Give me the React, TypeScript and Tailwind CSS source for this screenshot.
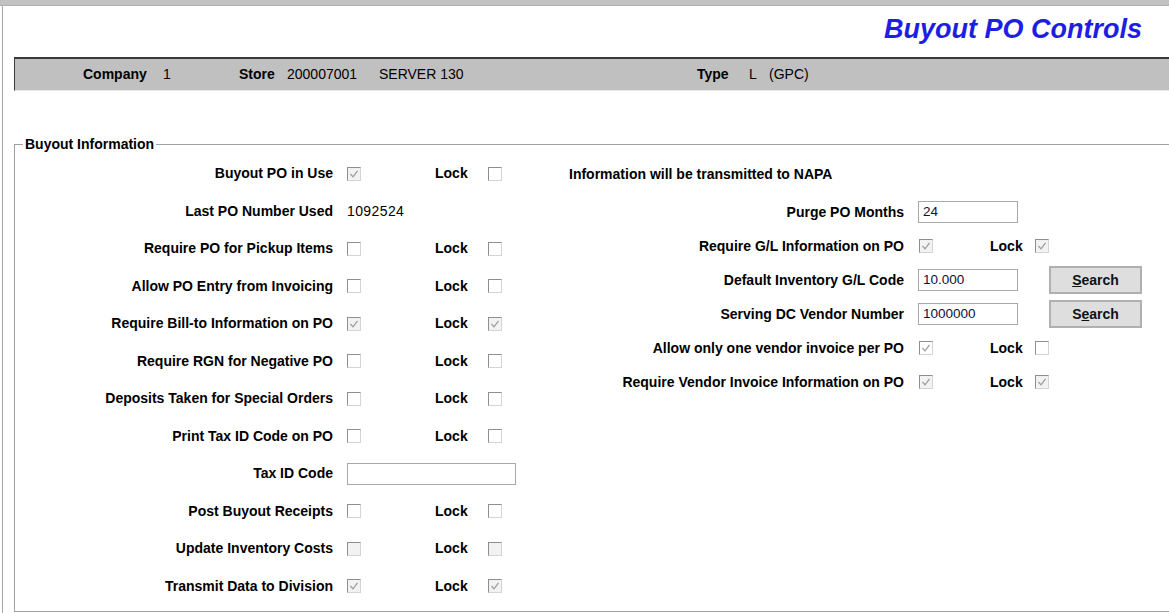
import React from "react";

type Box = { checked?: boolean; disabled?: boolean };

type LeftRow =
  | { label: string; kind: "check"; box: Box; lock: Box }
  | { label: string; kind: "value"; value: string }
  | { label: string; kind: "input"; value: string };

const leftRows: LeftRow[] = [
  { label: "Buyout PO in Use", kind: "check", box: { checked: true, disabled: true }, lock: {} },
  { label: "Last PO Number Used", kind: "value", value: "1092524" },
  { label: "Require PO for Pickup Items", kind: "check", box: {}, lock: {} },
  { label: "Allow PO Entry from Invoicing", kind: "check", box: {}, lock: {} },
  {
    label: "Require Bill-to Information on PO",
    kind: "check",
    box: { checked: true, disabled: true },
    lock: { checked: true, disabled: true },
  },
  { label: "Require RGN for Negative PO", kind: "check", box: {}, lock: {} },
  { label: "Deposits Taken for Special Orders", kind: "check", box: {}, lock: {} },
  { label: "Print Tax ID Code on PO", kind: "check", box: {}, lock: {} },
  { label: "Tax ID Code", kind: "input", value: "" },
  { label: "Post Buyout Receipts", kind: "check", box: {}, lock: {} },
  {
    label: "Update Inventory Costs",
    kind: "check",
    box: { disabled: true },
    lock: { disabled: true },
  },
  {
    label: "Transmit Data to Division",
    kind: "check",
    box: { checked: true, disabled: true },
    lock: { checked: true, disabled: true },
  },
];

const CheckBox = ({ checked, disabled, className = "" }: Box & { className?: string }) => (
  <span
    className={`flex items-center justify-center w-[14px] h-[14px] shrink-0 border border-t-[#8e8e8e] border-l-[#8e8e8e] border-r-[#d4d4d4] border-b-[#d4d4d4] ${
      disabled ? "bg-[#f2f2f2]" : "bg-white"
    } ${className}`}
  >
    {checked && (
      <svg width="10" height="10" viewBox="0 0 10 10">
        <path d="M1.5 5 L4 7.8 L8.5 1.8" fill="none" stroke="#9a9a9a" strokeWidth="1.2" />
      </svg>
    )}
  </span>
);

const TextBox = ({ value, w }: { value: string; w: string }) => (
  <div
    className={`ml-[14px] ${w} h-[22px] border border-[#a9a9a9] bg-white flex items-center px-[4px] text-[13.5px] text-[#10103a]`}
  >
    {value}
  </div>
);

const SearchButton = ({ pre, key1, post }: { pre: string; key1: string; post: string }) => (
  <button className="ml-[31px] w-[93px] h-[28px] border-2 border-[#b0b0b0] bg-[#dedede] text-[14px] font-bold text-[#111]">
    {pre}
    <span className="underline">{key1}</span>
    {post}
  </button>
);

const RightCheckRow = ({ label, box, lock }: { label: string; box: Box; lock: Box }) => (
  <div className="h-[34px] flex items-center">
    <span className="w-[364px] text-right font-bold">{label}</span>
    <CheckBox {...box} className="ml-[15px]" />
    <span className="ml-[57px] w-[45px] font-bold">Lock</span>
    <CheckBox {...lock} />
  </div>
);

export default function App() {
  return (
    <div
      className="w-[1169px] h-[613px] overflow-hidden bg-white text-[14px] text-black"
      style={{ fontFamily: '"Liberation Sans", Arial, sans-serif' }}
    >
      <div className="h-[6px] bg-[#c2c2c2] border-b border-[#b0b0b0]" />
      <div className="ml-[2px] h-[607px] border-l border-[#a6a6a6]">
        <div className="h-[51px] pt-[10px] pr-[27px] text-right">
          <span className="text-[27px] leading-[27px] font-bold italic text-[#1e1ee2]">
            Buyout PO Controls
          </span>
        </div>

        <div className="ml-[11px] h-[34px] bg-[#c0c0c0] border-t-2 border-t-[#3a3a3a] border-l border-l-[#3a3a3a] border-b border-b-[#e6e6e6] flex items-center pl-[68px] whitespace-nowrap">
          <span className="w-[80px] font-bold">Company</span>
          <span className="w-[76px]">1</span>
          <span className="w-[48px] font-bold">Store</span>
          <span className="w-[92px]">200007001</span>
          <span className="w-[318px]">SERVER 130</span>
          <span className="w-[52px] font-bold">Type</span>
          <span className="w-[20px]">L</span>
          <span>(GPC)</span>
        </div>

        <fieldset className="mt-[45px] ml-[11px] w-[1200px] h-[476px] border border-[#a0a0a0] pt-[3px]">
          <legend className="ml-[8px] px-[2px] font-bold leading-[16px]">Buyout Information</legend>
          <div className="flex whitespace-nowrap">
            <div className="w-[525px] flex flex-col">
              {leftRows.map((r) => (
                <div key={r.label} className="h-[37.5px] flex items-center">
                  <span className="w-[318px] text-right font-bold">{r.label}</span>
                  {r.kind === "check" && (
                    <>
                      <CheckBox {...r.box} className="ml-[14px]" />
                      <span className="ml-[74px] w-[53px] font-bold">Lock</span>
                      <CheckBox {...r.lock} />
                    </>
                  )}
                  {r.kind === "value" && (
                    <span className="ml-[14px] tracking-[0.4px]">{r.value}</span>
                  )}
                  {r.kind === "input" && <TextBox value={r.value} w="w-[169px]" />}
                </div>
              ))}
            </div>

            <div className="flex flex-col">
              <div className="h-[40px] flex items-center pl-[29px] pb-[2px] font-bold">
                Information will be transmitted to NAPA
              </div>
              <div className="h-[34px] flex items-center">
                <span className="w-[364px] text-right font-bold">Purge PO Months</span>
                <TextBox value="24" w="w-[100px]" />
              </div>
              <RightCheckRow
                label="Require G/L Information on PO"
                box={{ checked: true, disabled: true }}
                lock={{ checked: true, disabled: true }}
              />
              <div className="h-[34px] flex items-center">
                <span className="w-[364px] text-right font-bold">Default Inventory G/L Code</span>
                <TextBox value="10.000" w="w-[100px]" />
                <SearchButton pre="" key1="S" post="earch" />
              </div>
              <div className="h-[34px] flex items-center">
                <span className="w-[364px] text-right font-bold">Serving DC Vendor Number</span>
                <TextBox value="1000000" w="w-[100px]" />
                <SearchButton pre="S" key1="e" post="arch" />
              </div>
              <RightCheckRow
                label="Allow only one vendor invoice per PO"
                box={{ checked: true }}
                lock={{}}
              />
              <RightCheckRow
                label="Require Vendor Invoice Information on PO"
                box={{ checked: true, disabled: true }}
                lock={{ checked: true, disabled: true }}
              />
            </div>
          </div>
        </fieldset>
      </div>
    </div>
  );
}
